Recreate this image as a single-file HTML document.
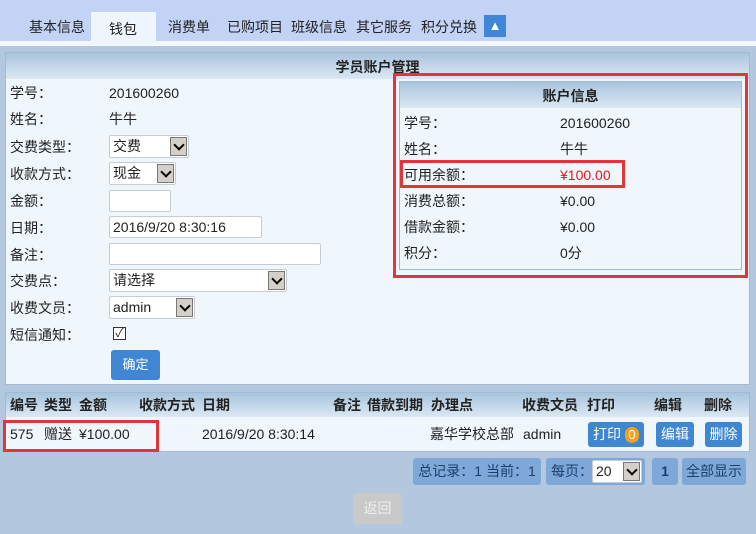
<!DOCTYPE html>
<html><head><meta charset="utf-8"><style>
*{margin:0;padding:0;box-sizing:border-box}
body{width:756px;height:534px;background:#b3c7df;font-family:"Liberation Sans","Noto Sans CJK SC",sans-serif;font-size:14px;color:#222;position:relative;overflow:hidden}
.a{position:absolute;white-space:nowrap}
.t{line-height:20px}
.inp{position:absolute;background:#fff;border:1px solid #c8ccd2;border-radius:2px;line-height:20px;padding-left:3px;font-size:14px}
.sel .ar{position:absolute;right:1px;top:1px;width:17px;height:19px;background:#d4d0c8;border:1px solid #777;}
.ar::after{content:"";position:absolute;left:4px;top:3px;width:6px;height:6px;border-right:2px solid #000;border-bottom:2px solid #000;transform:rotate(45deg)}
.hd{background:linear-gradient(#a9c4dc,#dbe8f4);font-weight:bold;text-align:center}
.btn{position:absolute;background:#3f86d3;color:#fff;border-radius:3px;text-align:center}
.pg{position:absolute;background:#7ea8d8;border-radius:3px;color:#1d3f6e;line-height:27px;text-align:center}
</style></head><body>
<div class="a" style="left:0;top:0;width:756px;height:42px;background:#c3d3f6"></div>
<div class="a" style="left:0;top:41px;width:756px;height:5px;background:#f4f8fe"></div>
<div class="a" style="left:91px;top:12px;width:65px;height:32px;background:#eef5fc"></div>
<div class="a t" style="left:29px;top:17px">基本信息</div>
<div class="a t" style="left:109px;top:19px">钱包</div>
<div class="a t" style="left:168px;top:17px">消费单</div>
<div class="a t" style="left:227px;top:17px">已购项目</div>
<div class="a t" style="left:291px;top:17px">班级信息</div>
<div class="a t" style="left:356px;top:17px">其它服务</div>
<div class="a t" style="left:421px;top:17px">积分兑换</div>
<div class="a" style="left:484px;top:15px;width:22px;height:22px;background:#3f86d8;color:#fff;text-align:center;line-height:22px;font-size:13px">▲</div>

<div class="a" style="left:5px;top:52px;width:745px;height:333px;background:#eff7fd;border:1px solid #9fbbd6"></div>
<div class="a hd" style="left:6px;top:53px;width:743px;height:26px;line-height:28px">学员账户管理</div>

<div class="a t" style="left:10px;top:83px">学号：</div><div class="a t" style="left:109px;top:83px">201600260</div>
<div class="a t" style="left:10px;top:109px">姓名：</div><div class="a t" style="left:109px;top:109px">牛牛</div>
<div class="a t" style="left:10px;top:137px">交费类型：</div>
<div class="inp sel" style="left:109px;top:135px;width:80px;height:23px">交费<span class="ar"></span></div>
<div class="a t" style="left:10px;top:164px">收款方式：</div>
<div class="inp sel" style="left:109px;top:162px;width:67px;height:23px">现金<span class="ar"></span></div>
<div class="a t" style="left:10px;top:191px">金额：</div>
<div class="inp" style="left:109px;top:190px;width:62px;height:22px"></div>
<div class="a t" style="left:10px;top:218px">日期：</div>
<div class="inp" style="left:109px;top:216px;width:153px;height:22px">2016/9/20 8:30:16</div>
<div class="a t" style="left:10px;top:245px">备注：</div>
<div class="inp" style="left:109px;top:243px;width:212px;height:22px"></div>
<div class="a t" style="left:10px;top:271px">交费点：</div>
<div class="inp sel" style="left:109px;top:269px;width:178px;height:23px">请选择<span class="ar"></span></div>
<div class="a t" style="left:10px;top:298px">收费文员：</div>
<div class="inp sel" style="left:109px;top:296px;width:86px;height:23px">admin<span class="ar"></span></div>
<div class="a t" style="left:10px;top:325px">短信通知：</div>
<div class="a" style="left:113px;top:327px;width:13px;height:13px;border:1px solid #333;background:#fff;font-size:12px;line-height:11px;text-align:center">✓</div>
<div class="btn" style="left:111px;top:350px;width:49px;height:30px;line-height:30px;font-size:13px">确定</div>

<div class="a" style="left:399px;top:81px;width:343px;height:189px;background:#eff7fd;border:1px solid #9fbbd6"></div>
<div class="a hd" style="left:400px;top:82px;width:341px;height:26px;line-height:28px">账户信息</div>
<div class="a" style="left:393px;top:73px;width:355px;height:205px;border:3px solid #e0363a"></div>
<div class="a t" style="left:404px;top:113px">学号：</div><div class="a t" style="left:560px;top:113px">201600260</div>
<div class="a t" style="left:404px;top:139px">姓名：</div><div class="a t" style="left:560px;top:139px">牛牛</div>
<div class="a t" style="left:404px;top:165px">可用余额：</div><div class="a t" style="left:560px;top:165px;color:#e01818">¥100.00</div>
<div class="a" style="left:400px;top:160px;width:225px;height:28px;border:3px solid #e0363a"></div>
<div class="a t" style="left:404px;top:191px">消费总额：</div><div class="a t" style="left:560px;top:191px">¥0.00</div>
<div class="a t" style="left:404px;top:217px">借款金额：</div><div class="a t" style="left:560px;top:217px">¥0.00</div>
<div class="a t" style="left:404px;top:243px">积分：</div><div class="a t" style="left:560px;top:243px">0分</div>

<div class="a" style="left:5px;top:392px;width:745px;height:60px;background:#eff7fd;border:1px solid #9fbbd6"></div>
<div class="a" style="left:6px;top:393px;width:743px;height:24px;background:linear-gradient(#a9c4dc,#dbe8f4)"></div>
<div class="a t" style="left:0;top:395px;font-weight:bold;width:756px;height:20px">
<span class="a" style="left:10px">编号</span><span class="a" style="left:44px">类型</span><span class="a" style="left:79px">金额</span><span class="a" style="left:139px">收款方式</span><span class="a" style="left:202px">日期</span><span class="a" style="left:333px">备注</span><span class="a" style="left:367px">借款到期</span><span class="a" style="left:431px">办理点</span><span class="a" style="left:522px">收费文员</span><span class="a" style="left:587px">打印</span><span class="a" style="left:654px">编辑</span><span class="a" style="left:704px">删除</span></div>
<div class="a t" style="left:10px;top:424px">575</div><div class="a t" style="left:44px;top:424px">赠送</div><div class="a t" style="left:79px;top:424px">¥100.00</div>
<div class="a t" style="left:202px;top:424px">2016/9/20 8:30:14</div>
<div class="a t" style="left:430px;top:424px">嘉华学校总部</div><div class="a t" style="left:523px;top:424px">admin</div>
<div class="a" style="left:3px;top:420px;width:156px;height:32px;border:3px solid #e0363a"></div>
<div class="btn" style="left:588px;top:422px;width:56px;height:25px;line-height:25px">打印 <span style="display:inline-block;width:14px;height:16px;border-radius:8px;background:#f5a21a;line-height:16px;font-size:13px">0</span></div>
<div class="btn" style="left:656px;top:422px;width:38px;height:25px;line-height:25px">编辑</div>
<div class="btn" style="left:705px;top:422px;width:37px;height:25px;line-height:25px">删除</div>

<div class="pg" style="left:413px;top:458px;width:128px;height:27px">总记录：1 当前：1</div>
<div class="pg" style="left:546px;top:458px;width:99px;height:27px;text-align:left;padding-left:5px">每页：</div>
<div class="inp sel" style="left:592px;top:460px;width:50px;height:23px">20<span class="ar"></span></div>
<div class="pg" style="left:652px;top:458px;width:26px;height:27px;font-weight:bold">1</div>
<div class="pg" style="left:682px;top:458px;width:64px;height:27px">全部显示</div>
<div class="a" style="left:353px;top:493px;width:49px;height:31px;background:#c9c9c9;border-radius:3px;color:#eee;text-align:center;line-height:31px">返回</div>
</body></html>
